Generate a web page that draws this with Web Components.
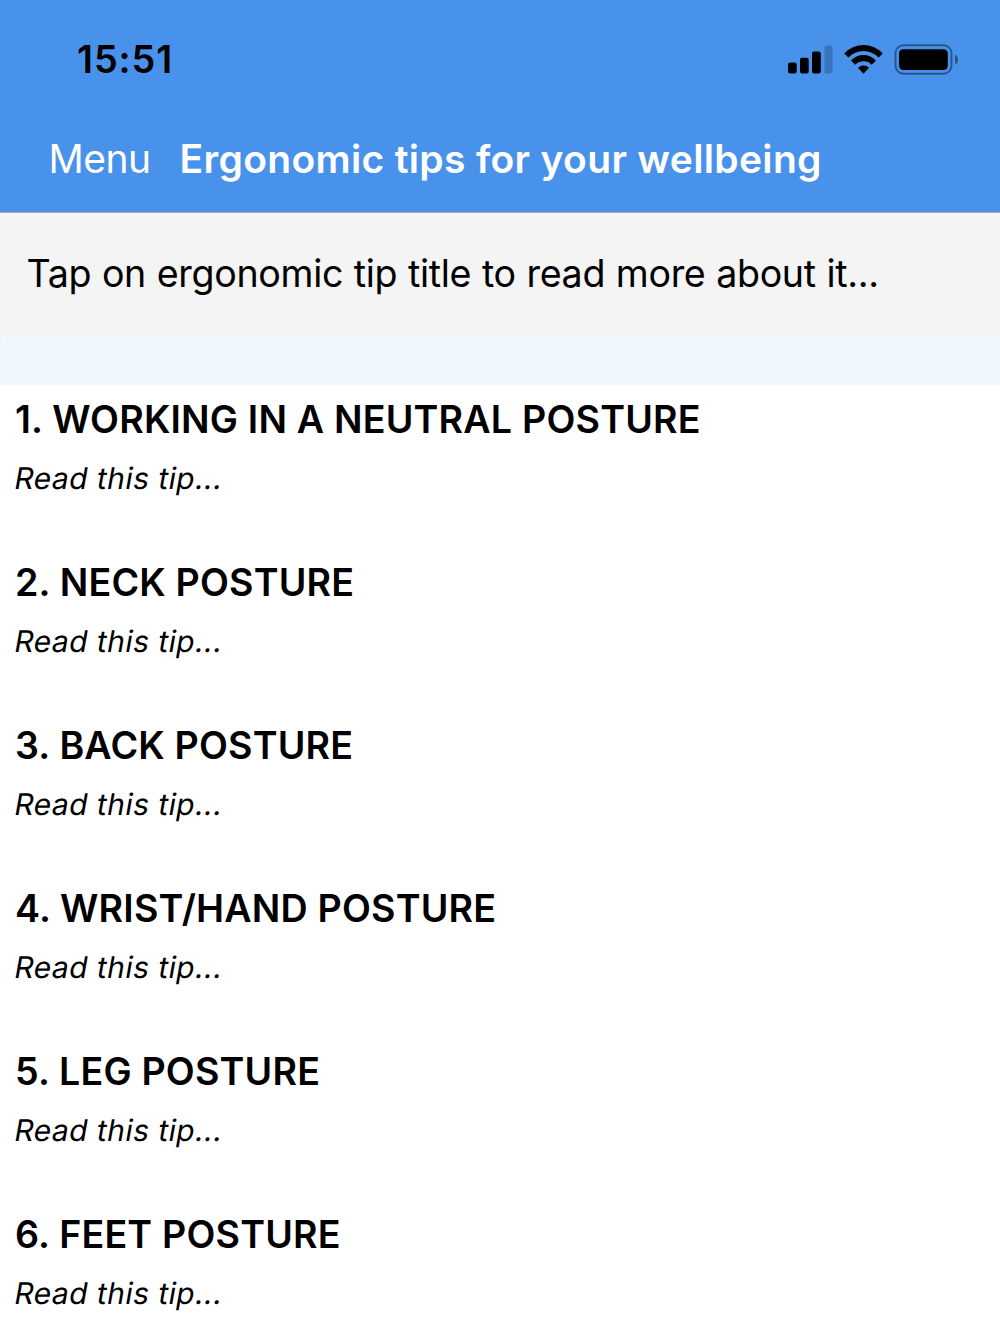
<!DOCTYPE html>
<html lang="en">
<head>
<meta charset="utf-8">
<title>Ergonomic tips</title>
<style>
  body {
    margin: 0;
    background: #fff;
    color: #000;
    font-family: Inter, "Liberation Sans", sans-serif;
  }
</style>
</head>
<body>
<tips-app></tips-app>

<script>
class StatusBar extends HTMLElement {
  constructor() {
    super();
    this.shadowDom = this.attachShadow({mode: "open"});
  }

  connectedCallback() {
    this.shadowDom.innerHTML = `
    <style>
      :host {
        display: flex;
        justify-content: space-between;
        align-items: center;
        box-sizing: border-box;
        height: 119px;
        padding: 0 41px 0 77px;
      }

      time {
        font-size: 37.8px;
        font-weight: 600;
        letter-spacing: .9px;
        line-height: 47px;
      }

      svg {
        display: block;
      }
    </style>

    <time>${this.getAttribute('time')}</time>
    <svg width="171" height="31" viewBox="788 44 171 31">
      <rect x="788" y="62.5" width="8.7" height="11" rx="2"/>
      <rect x="800" y="57.8" width="8.7" height="15.7" rx="2"/>
      <rect x="812" y="51.6" width="8.8" height="21.9" rx="2"/>
      <rect x="824.4" y="45.6" width="8.3" height="27.9" rx="2" opacity=".2"/>
      <path d="M844.2 53.4A26.5 26.5 0 0 1 882.8 53.4L878.6 57.6A20.8 20.8 0 0 0 848.4 57.6Z"/>
      <path d="M851 60.6A17 17 0 0 1 876 60.6L871.8 64.8A11.6 11.6 0 0 0 855.2 64.8Z"/>
      <path d="M858 67.7A7.8 7.8 0 0 1 869 67.7L863.5 73.8Z"/>
      <rect x="895.5" y="45.3" width="56" height="28.4" rx="8" fill="none" stroke="#000" stroke-width="1.9" opacity=".42"/>
      <rect x="899" y="49.2" width="48.8" height="20.8" rx="4.2"/>
      <path d="M955 54.4C959 56 959 63 955 64.6Z" opacity=".42"/>
    </svg>
    `;
  }
}

class NavBar extends HTMLElement {
  constructor() {
    super();
    this.shadowDom = this.attachShadow({mode: "open"});
  }

  connectedCallback() {
    this.shadowDom.innerHTML = `
    <style>
      :host {
        display: flex;
        align-items: center;
        box-sizing: border-box;
        height: 94px;
        padding: 0 48.5px 14px;
        gap: 29px;
        color: #fff;
        font-size: 39px;
        line-height: 48px;
        border-bottom: 1px solid #a9b0ba;
      }

      h1 {
        margin: 0;
        font-size: inherit;
        font-weight: 600;
        letter-spacing: .33px;
      }

      .menu {
        font-weight: 400;
        letter-spacing: -.5px;
      }
    </style>

    <span class="menu">${this.getAttribute('menu')}</span>
    <h1><slot></slot></h1>
    `;
  }
}

class TipItem extends HTMLElement {
  constructor() {
    super();
    this.shadowDom = this.attachShadow({mode: "open"});
  }

  connectedCallback() {
    this.shadowDom.innerHTML = `
    <style>
      :host {
        display: block;
        box-sizing: border-box;
        height: 163px;
        padding: 12px 15px 0;
      }

      h2 {
        margin: 0;
        font-size: 37.6px;
        font-weight: 600;
        letter-spacing: .2px;
        line-height: 46px;
        white-space: nowrap;
      }

      p {
        margin: 16px 0 0 -2px;
        font-size: 30px;
        letter-spacing: .45px;
        line-height: 38px;
      }

      /* slanted roman, Inter's own italic has a one-storey a */
      span {
        display: inline-block;
        transform: skewX(-10deg);
        transform-origin: 0 30px;
      }
    </style>

    <h2><slot></slot></h2>
    <p><span>Read this tip...</span></p>
    `;
  }
}

class TipsApp extends HTMLElement {
  constructor() {
    super();
    this.shadowDom = this.attachShadow({mode: "open"});
    this.tips = [
      'WORKING IN A NEUTRAL POSTURE',
      'NECK POSTURE',
      'BACK POSTURE',
      'WRIST/HAND POSTURE',
      'LEG POSTURE',
      'FEET POSTURE'
    ];
  }

  connectedCallback() {
    this.shadowDom.innerHTML = `
    <style>
      :host {
        display: block;
        height: 1334px;
        overflow: hidden;
      }

      header {
        background: #4992ec;
      }

      .hint {
        box-sizing: border-box;
        height: 124px;
        margin: 0;
        padding: 38px 26.5px 0;
        background: #f4f4f4;
        font-size: 37.6px;
        letter-spacing: -.32px;
        word-spacing: .5px;
        line-height: 46px;
      }

      .band {
        height: 48px;
        background: #f0f8ff;
        border-left: 2px solid #f4f4f4;
        border-bottom-left-radius: 3px;
      }
    </style>

    <header>
      <status-bar time="15:51"></status-bar>
      <nav-bar menu="Menu">Ergonomic tips for your wellbeing</nav-bar>
    </header>
    <p class="hint"><span>Tap on ergonomic tip title to read more about it...</span></p>
    <div class="band"></div>
    <main>
      ${this.tips.map((tip, i) => `<tip-item>${i + 1}. ${tip}</tip-item>`).join('')}
    </main>
    `;
  }
}

customElements.define("status-bar", StatusBar);
customElements.define("nav-bar", NavBar);
customElements.define("tip-item", TipItem);
customElements.define("tips-app", TipsApp);
</script>
</body>
</html>
